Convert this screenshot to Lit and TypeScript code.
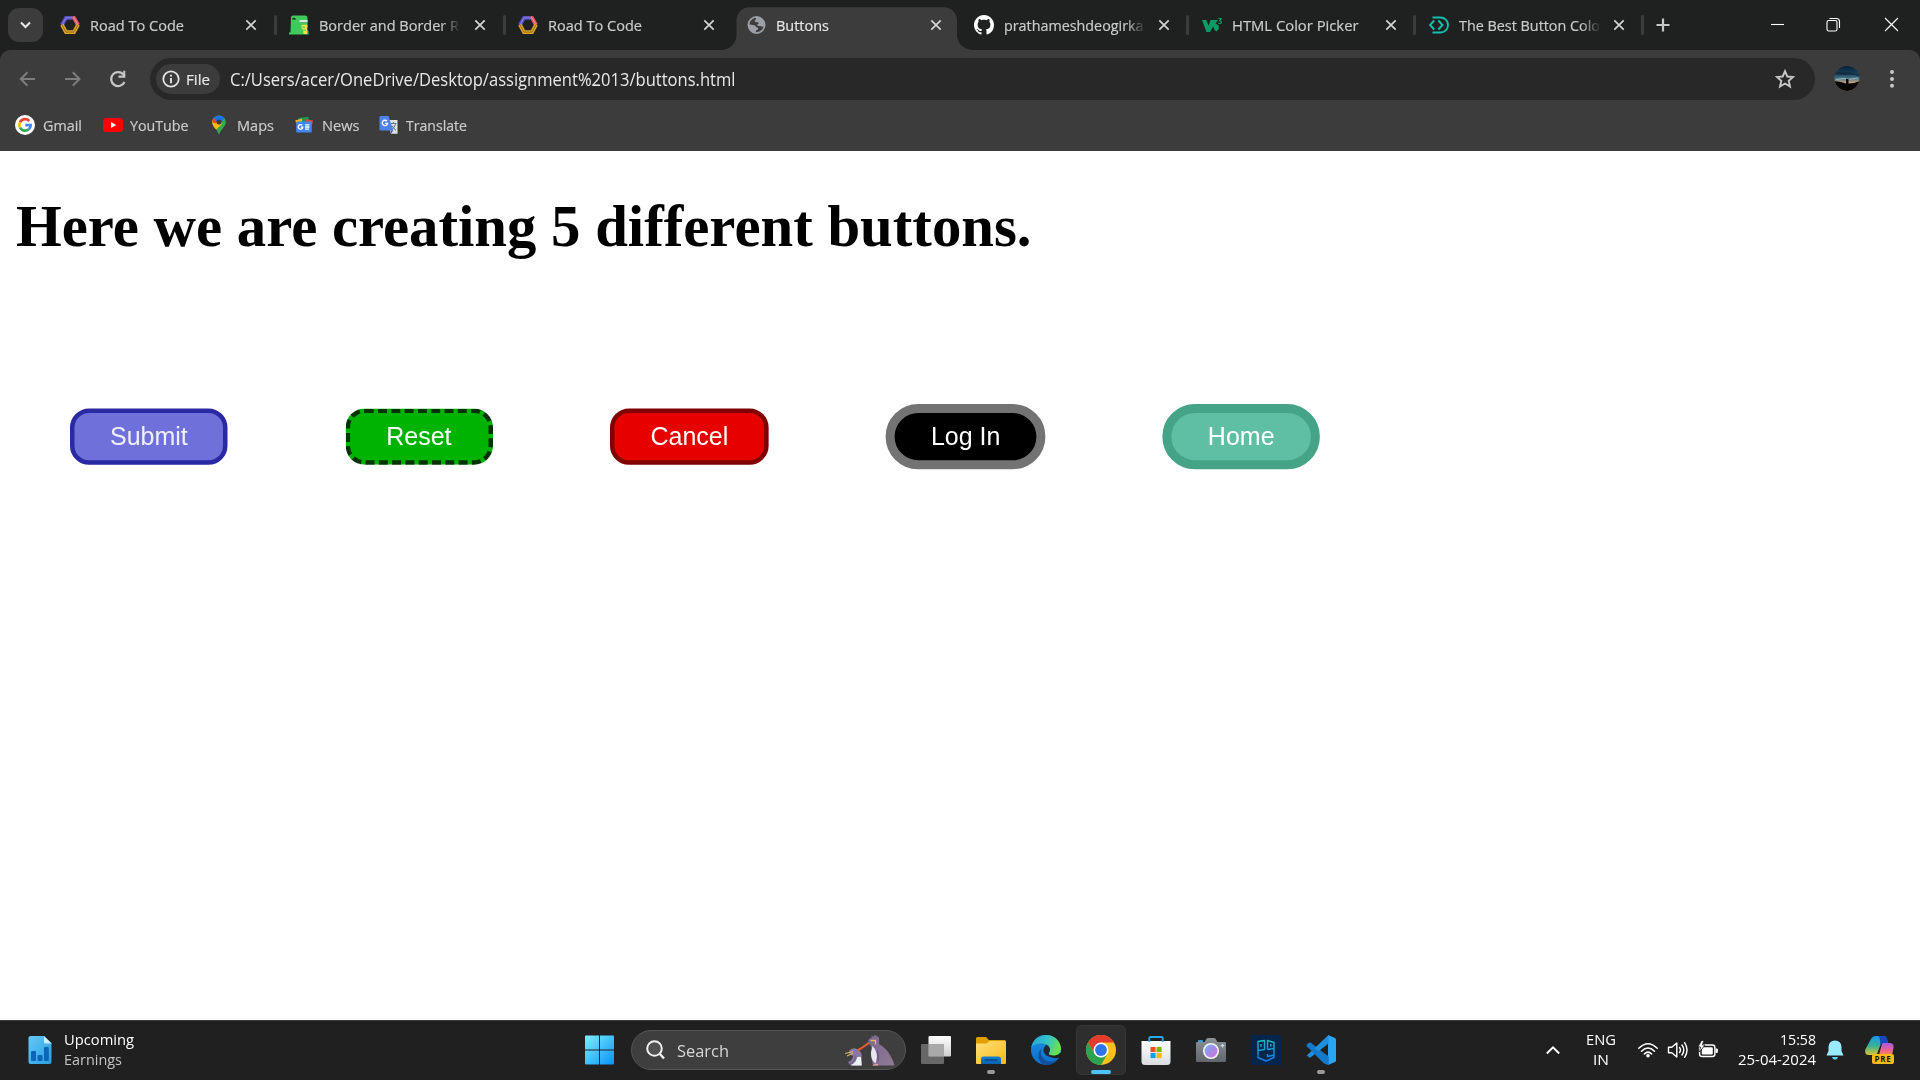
import { LitElement, html, svg, css, nothing } from "lit";
import { customElement, property, query } from "lit/decorators.js";
import { classMap } from "lit/directives/class-map.js";

/** One line of text squeezed to an exact advance width. */
@customElement("fit-text")
class FitText extends LitElement {
  @property({ type: Number }) width = 0;
  @property() text = "";
  @query("span") span!: HTMLSpanElement;
  static styles = css`
    :host { display: block; flex: none; white-space: nowrap; }
    span { display: inline-block; transform-origin: 0 50%; vertical-align: top; }
  `;
  render() {
    return html`<span>${this.text}</span>`;
  }
  updated() {
    this.style.width = `${this.width}px`;
    this.span.style.transform = "none";
    const natural = this.span.offsetWidth ? this.span.getBoundingClientRect().width : this.width;
    this.span.style.transform = `scaleX(${this.width / natural})`;
  }
}

const hexagon = svg`
  <g fill="none" stroke-width="3.800">
    <path d="M1.900 10 6 2.800H12.600" stroke="#5b50c4"/>
    <path d="M12.600 2.800H14L18.100 10" stroke="#e0566a"/>
    <path d="M18.100 9.600 14 17.100H6L1.900 9.600" stroke="#e0a526"/>
  </g>
  <g fill="none" stroke-width=".9" opacity=".75">
    <path d="M1.900 10 6 2.800H12.600" stroke="#a49cf0"/>
    <path d="M12.600 2.800H14L18.100 10" stroke="#ffb0b0"/>
    <path d="M18.100 9.600 14 17.100H6L1.900 9.600" stroke="#6e4c10"/>
  </g>`;

const favicons: Record<string, unknown> = {
  hexagon,
  dino: svg`
    <path d="M2 2.500Q2 .5 4 .5H16Q18.500 .5 18.500 3V9.500L17 10.500 18.500 11V15L19.500 16V19.500H0V17.500H1.500Z" fill="#3ecb5c"/>
    <path d="M12.500 10 18.500 9.500V12H18V19H14.500L14 15 12.500 13Z" fill="#f2df4a"/>
    <path d="M13 12.200H16M14 15H17" stroke="#3ecb5c" stroke-width="1"/>
    <path d="M10 7 11 5H18.500V7Z" fill="#dfeee2"/><path d="M10.500 7.300H18.500" stroke="#7aa886" stroke-width=".8"/>
    <path d="M3.500 4.500Q5 2.500 6.500 4.500" stroke="#123c1d" stroke-width="1.300" fill="none"/>`,
  globe: svg`
    <circle cx="9.500" cy="10" r="8.100" fill="none" stroke="#9aa0a6" stroke-width="1.800"/>
    <path d="M9 1.800C13 1.300 17.300 4.500 17.600 9.500V11.500C16 12.500 14.500 10.500 12 11C10 11.300 9.800 9.500 11.300 8.800C12.300 8.300 11.500 7.300 10 7.300C7.500 7.300 7 6 8.300 5C9.500 4 8.700 2.800 9 1.800Z" fill="#9aa0a6"/>
    <path d="M1.300 9.200C4 9.500 5.500 9.800 7.200 10.200C9.200 10.700 8.400 12.300 10.400 12.500C11.800 12.800 11.300 14.500 9.800 15C8.800 15.500 9 17 8.500 18C4 17.500 1 13.500 1.300 9.200Z" fill="#9aa0a6"/>`,
  github: svg`
    <path transform="scale(1.25)" fill="#fff" fill-rule="evenodd" d="M8 0C3.580 0 0 3.580 0 8c0 3.540 2.290 6.530 5.470 7.590.4.070.550-.170.550-.380 0-.190-.010-.820-.010-1.490-2.010.370-2.530-.490-2.690-.940-.090-.230-.480-.940-.820-1.130-.280-.150-.680-.520-.010-.530.630-.010 1.080.580 1.230.820.720 1.210 1.870.870 2.330.660.070-.520.280-.870.510-1.070-1.780-.200-3.640-.890-3.640-3.950 0-.870.310-1.590.820-2.150-.080-.200-.360-1.020.080-2.120 0 0 .670-.210 2.200.820.640-.180 1.320-.270 2-.270s1.360.090 2 .270c1.530-1.040 2.200-.820 2.200-.820.440 1.100.160 1.920.080 2.120.510.560.820 1.270.820 2.150 0 3.070-1.870 3.750-3.650 3.950.290.250.540.730.540 1.480 0 1.070-.010 1.930-.010 2.200 0 .210.150.460.550.380A8.010 8.010 0 0 0 16 8c0-4.420-3.580-8-8-8Z"/>`,
  w3: svg`
    <path d="M0 5H4.200L6.600 10.800 8.500 5H16L13.500 8.500 16.800 10.500V14L14.500 16.500 12.500 15 11.200 11.500 8 17H4.500Z" fill="#0a9c65"/>
    <path d="M16.300 3.500H19.200L17.700 5.700Q19.400 5.800 19.300 7.300 19 9 16.300 8.300" fill="none" stroke="#0a9c65" stroke-width="1.200"/>`,
  dcode: svg`
    <g fill="none" stroke="#17bfb0" stroke-width="1.900">
      <path d="M3.500 2.500H11.500A7.400 7.400 0 0 1 11.500 17.500H3.500"/>
      <path d="M5.200 5.500 1 10 5.200 14.500M9.300 5.500 13.500 10 9.300 14.500"/>
    </g>`,
};

const tabs = [
  { icon: "hexagon", title: "Road To Code", width: 94 },
  { icon: "dino", title: "Border and Border R", width: 140, cut: true },
  { icon: "hexagon", title: "Road To Code", width: 94 },
  { icon: "globe", title: "Buttons", width: 53, active: true },
  { icon: "github", title: "prathameshdeogirka", width: 139.5, cut: true },
  { icon: "w3", title: "HTML Color Picker", width: 126.5 },
  { icon: "dcode", title: "The Best Button Colo", width: 141, cut: true },
];

const bookmarks = [
  {
    label: "Gmail", width: 39, gap: 8, after: 21,
    icon: svg`<circle cx="10" cy="10" r="10" fill="#fff"/>
      <g fill="none" stroke-width="2.700">
        <path d="M14.300 6A5.700 5.700 0 0 0 5 7.300" stroke="#ea4335"/>
        <path d="M5 7.300A5.700 5.700 0 0 0 5 12.700" stroke="#fbbc05"/>
        <path d="M5 12.700A5.700 5.700 0 0 0 13.700 14.300" stroke="#34a853"/>
        <path d="M10.300 10.200H15.700A5.700 5.700 0 0 1 13.700 14.300" stroke="#4285f4"/>
      </g>`,
  },
  {
    label: "YouTube", width: 58.5, gap: 7, after: 20,
    icon: svg`<rect x="0" y="3" width="20" height="14" rx="3.500" fill="#f00"/><path d="M8 7V13L13.200 10Z" fill="#fff"/>`,
  },
  {
    label: "Maps", width: 37, gap: 8, after: 20,
    icon: svg`<path d="M10 .4C6 .4 3.200 3.500 3.200 7.200 3.200 11.500 7.500 13 10 19.800 12.500 13 16.800 11.500 16.800 7.200 16.800 3.500 14 .4 10 .4Z" fill="#34a853"/>
      <path d="M4.500 11.300Q3.200 9.400 3.200 7.200 3.200 5 4.700 3.100L8 5.800 13.500 8.500 7.300 14.500Q5.500 13 4.500 11.300Z" fill="#fbbc04"/>
      <path d="M4.700 3.100Q3.200 5 3.200 7.200L7 8.500 8.500 5.800Z" fill="#ea4335"/>
      <path d="M4.700 3.100C7.500-.6 13-.4 15.600 3.300L11.200 8 7.600 6.500Z" fill="#1a73e8"/><circle cx="10" cy="7" r="2.500" fill="#3c3c3c"/>`,
  },
  {
    label: "News", width: 37.5, gap: 8, after: 20,
    icon: svg`<path d="M4.500 3 14.500 1.800V8H4.500Z" fill="#0f9d58"/><path d="M1.200 5.500 8 3.500V9H2.500Z" fill="#fbbc04"/><path d="M12 4 19 5.500 18 10H11Z" fill="#ea4335"/>
      <rect x="2.200" y="6.500" width="15.600" height="11" rx="1.200" fill="#4285f4"/>
      <path d="M8.300 10.400A2.300 2.300 0 1 0 8.800 12.200H6.800" fill="none" stroke="#fff" stroke-width="1.300"/><path d="M11 9.800H15.500M11 12H15.500M11 14.200H15" stroke="#fff" stroke-width="1.300"/>`,
  },
  {
    label: "Translate", width: 61, gap: 7, after: 0,
    icon: svg`<path d="M7 5H18.500V18.700H12Z" fill="#e3e3e3"/><path d="M11.500 8.500H17.500M14.300 7V8.500M16.500 8.500Q15.500 13 12 14.500M12.500 10.500 17 15.500" stroke="#607d8b" stroke-width="1.100" fill="none"/>
      <path d="M1.500 1H9.500L14.300 15.500H1.500Q.5 15.500.5 14.500V2Q.5 1 1.500 1Z" fill="#4c84ee"/><path d="M11.500 15.500H14.300L12 18.700Z" fill="#2a56c6"/>
      <path d="M8 6.200A2.700 2.700 0 1 0 8.600 8.300H6.200" fill="none" stroke="#fff" stroke-width="1.300"/>`,
  },
];

const pageButtons = [
  { label: "Submit", kind: "submit" },
  { label: "Reset", kind: "reset" },
  { label: "Cancel", kind: "cancel" },
  { label: "Log In", kind: "login" },
  { label: "Home", kind: "home" },
];

const apps = [
  {
    mark: "", icon: svg`<defs><linearGradient id="tv" x2="0" y2="1"><stop stop-color="#fff"/><stop offset="1" stop-color="#cfcfcf"/></linearGradient></defs>
      <rect x="7.500" y="1" width="22.500" height="20.500" rx="1" fill="url(#tv)"/><rect x="0" y="9" width="23" height="20" rx="1" fill="#747474" opacity=".85"/><path d="M7.500 9H23V21.500H7.500Z" fill="#a9a9a9"/>`,
  },
  {
    mark: "open", icon: svg`<defs><linearGradient id="fo" x2="1" y2="1"><stop stop-color="#ffe07a"/><stop offset="1" stop-color="#fbb917"/></linearGradient><linearGradient id="fb" x2="0" y2="1"><stop stop-color="#1481d0"/><stop offset="1" stop-color="#0a62b0"/></linearGradient></defs>
      <path d="M0 3.500Q0 2 1.500 2H10L13 5H28.500Q30 5 30 6.500V10H0Z" fill="#e0a100"/><path d="M0 8.500H10.500L13.500 6H29Q30 6 30 7V28Q30 29 29 29H1Q0 29 0 28Z" fill="url(#fo)"/>
      <path d="M5 29V24Q5 21.500 7.500 21.500H22.500Q25 21.500 25 24V29Z" fill="url(#fb)"/><path d="M8.500 25H21.500" stroke="#083f78" stroke-width="1.200"/>`,
  },
  {
    mark: "", icon: svg`<defs><linearGradient id="ea" x2="1" y2=".3"><stop stop-color="#259fdf"/><stop offset=".6" stop-color="#35c6c4"/><stop offset="1" stop-color="#6cdf4f"/></linearGradient><linearGradient id="eb" x2="0" y2="1"><stop stop-color="#1a90e0"/><stop offset="1" stop-color="#0b6fce"/></linearGradient></defs>
      <circle cx="15" cy="15" r="15" fill="url(#eb)"/>
      <path d="M11 13C8 18 11 26 19 26.500 23 26.700 26 25 27.800 23 24 29 18 30.500 14 30 7 28 5 18 11 13Z" fill="#124f9c"/>
      <path d="M30 21.500Q26 24.500 20.500 22.500 17.500 21.300 17.800 19L25 18H31V22Z" fill="#202020"/>
      <path d="M.3 12.500C2 4 8 0 15 0 24 0 30 6.500 30 14 30 18.500 26.500 20.500 22.500 20.500 19 20.500 17.300 19.500 18 18 20.500 13.500 16.500 9 11.500 8.500 6 8 2 10 .3 12.500Z" fill="url(#ea)"/>
      <path d="M15.500 9.500Q19.500 12 19 15.500 18 18 17.600 19 18 21 20 22 15 21.500 13 18 11 14 15.500 9.500Z" fill="#202020" opacity=".9"/>`,
  },
  {
    mark: "active", icon: svg`<circle cx="15" cy="15" r="15" fill="#fbc116"/>
      <path d="M2 7.500A15 15 0 0 1 28 7.500H15L8.500 18.800Z" fill="#e33b2e"/>
      <path d="M2 7.500A15 15 0 0 0 15 30L21.500 18.800 15 22.500 8.500 18.800Z" fill="#2da24c"/><circle cx="15" cy="15" r="7.500" fill="#fff"/><circle cx="15" cy="15" r="5.900" fill="#2f74ea"/>`,
  },
  {
    mark: "", icon: svg`<defs><linearGradient id="st" x2="0" y2="1"><stop stop-color="#fff"/><stop offset="1" stop-color="#d9dde0"/></linearGradient></defs>
      <path d="M.5 6H29.500V26.500Q29.500 30 26 30H4Q.5 30 .5 26.500Z" fill="url(#st)"/><path d="M8.300 7V3Q8.300 2 9.300 2H20.700Q21.700 2 21.700 3V7" fill="none" stroke="#26a9ea" stroke-width="1.800"/>
      <path d="M9.500 12H14.600V17.100H9.500Z" fill="#f25022"/><path d="M15.500 12H20.600V17.100H15.500Z" fill="#7fba00"/><path d="M9.500 18H14.600V23.100H9.500Z" fill="#00a4ef"/><path d="M15.500 18H20.600V23.100H15.500Z" fill="#ffb900"/>`,
  },
  {
    mark: "", icon: svg`<defs><linearGradient id="ca" x2="0" y2="1"><stop stop-color="#8b9298"/><stop offset="1" stop-color="#60666b"/></linearGradient><linearGradient id="cl" x2="1" y2="1"><stop stop-color="#70b8f5"/><stop offset=".5" stop-color="#a48be6"/><stop offset="1" stop-color="#d873dc"/></linearGradient></defs>
      <rect x="2" y="5" width="5" height="3" rx="1" fill="#2e9fe0"/><path d="M0 8Q0 7 1 7H8.500L10.500 3.800Q11 3 12 3H18Q19 3 19.500 3.800L21.500 7H29Q30 7 30 8V26Q30 27 29 27H1Q0 27 0 26Z" fill="url(#ca)"/>
      <circle cx="15" cy="16" r="8" fill="#f3f3f3"/><circle cx="15" cy="16" r="6.400" fill="url(#cl)"/><path d="M26.500 9V12.500M24.700 10.700H28.300" stroke="#d5d8da" stroke-width="1.200"/>`,
  },
  {
    mark: "", icon: svg`<defs><linearGradient id="pg" gradientUnits="userSpaceOnUse" x1="0" y1="4" x2="0" y2="27"><stop stop-color="#17c5bd"/><stop offset="1" stop-color="#1673e6"/></linearGradient></defs>
      <rect width="30" height="30" fill="#04254c"/><g fill="none" stroke="url(#pg)" stroke-width="1.400" stroke-linejoin="round">
      <path d="M7 20.500V6.500L13.500 5.500V14.500L7 15.500"/><path d="M10 9V12"/><path d="M16.500 14.500V5.500L23 7.500V20L16.500 21.500V19M16.500 14.500 23 13.500M19.800 9V11.500"/><path d="M7 20.500V22.500L15 26 23 22.500V20"/></g>`,
  },
  {
    mark: "open", icon: svg`<path d="M22 0 29 3Q30 3.500 30 4.500V25.500Q30 26.500 29 27L22 30Z" fill="#2aa5f3"/>
      <path d="M.8 9.500 3 7.700Q4 7.200 4.800 7.800L22.500 21.500V30Z" fill="#1479c9"/><path d="M.8 20.500 3 22.300Q4 22.800 4.800 22.200L22.500 8.500V0Z" fill="#1f90db"/><path d="M.8 9.500Q0 10.500.8 11.300L18 28.500 22.500 30V21.500Z" fill="#1479c9"/>`,
  },
];

@customElement("browser-tabs")
class BrowserTabs extends LitElement {
  static styles = css`
    :host { display: flex; height: 50px; background: #1f2120; color: #cbcbcb; font: 500 15px/50px "Open Sans", "Noto Sans", sans-serif; -webkit-text-stroke: .2px; }
    svg { display: block; flex: none; }
    .search { width: 35px; height: 34px; margin: 8px 5px 0 8px; border-radius: 11px; background: #3c3c3c; flex: none; }
    .tab { position: relative; box-sizing: border-box; width: 229px; height: 50px; padding-left: 12px; display: flex; align-items: center; flex: none; }
    .late { width: 227.400px; }
    .title { width: 143px; margin-left: 10px; overflow: hidden; flex: none; }
    .cut { mask-image: linear-gradient(90deg, #000 122px, transparent 142px); }
    .close { margin-left: 12px; }
    .late .close { margin-left: 10.500px; }
    .divider { width: 3px; height: 20px; border-radius: 1.500px; background: #3c3c3c; margin-left: 17px; }
    .late .divider { margin-left: 16.200px; }
    .active { color: #e6e6e6; z-index: 1; }
    .active svg, .active .title { z-index: 1; }
    .active .title { margin-left: 9px; margin-right: .4px; }
    .shape { position: absolute; left: -14.500px; top: 0; }
    .add { margin: 0 0 0 4.500px; align-self: center; }
    .controls { display: flex; margin-left: auto; }
  `;
  render() {
    return html`
      <svg class="search" viewBox="0 0 35 34"><path d="M13 14.500 17.500 19 22 14.500" fill="none" stroke="#e8e8e8" stroke-width="2.100"/></svg>
      ${tabs.map((t, i) => html`
        <div class=${classMap({ tab: true, active: !!t.active, late: i > 2 })}>
          ${t.active ? html`<svg class="shape" width="252" height="50"><path d="M0 50A15.500 15.500 0 0 0 15.500 36V20A13 13 0 0 1 28.500 7.300H222.500A13 13 0 0 1 236 20V36A15.500 15.500 0 0 0 251 50Z" fill="#3c3c3c"/></svg>` : nothing}
          <svg class="icon" width="20" height="20" viewBox="0 0 20 20">${favicons[t.icon]}</svg>
          <div class=${classMap({ title: true, cut: !!t.cut })}><fit-text .text=${t.title} .width=${t.width}></fit-text></div>
          <svg class="close" width="12" height="12" viewBox="0 0 12 12"><path d="M1.300 1.300 10.700 10.700M10.700 1.300 1.300 10.700" stroke="#d4d4d4" stroke-width="1.700"/></svg>
          ${t.active || i === 2 ? nothing : html`<div class="divider"></div>`}
        </div>`)}
      <svg class="add" width="28" height="28" viewBox="0 0 28 28"><path d="M14 7.500V20.500M7.500 14H20.500" stroke="#c7c7c7" stroke-width="2.200"/></svg>
      <div class="controls">
        <svg width="57" height="50" viewBox="0 0 57 50"><path d="M22 24.500H35" stroke="#fff" stroke-width="1.100"/></svg>
        <svg width="57" height="50" viewBox="0 0 57 50"><g fill="none" stroke="#fff" stroke-width="1.100"><rect x="21" y="20.500" width="10" height="10.500" rx="1.800"/><path d="M23.500 18.500H30.500Q33.500 18.500 33.500 21.500V28"/></g></svg>
        <svg width="57" height="50" viewBox="0 0 57 50"><path d="M22 18 35 31M35 18 22 31" stroke="#fff" stroke-width="1.200"/></svg>
      </div>`;
  }
}

@customElement("browser-toolbar")
class BrowserToolbar extends LitElement {
  static styles = css`
    :host { display: block; height: 101px; background: #1f2120; font-family: "Open Sans", "Noto Sans", sans-serif; }
    .panel { height: 101px; box-sizing: border-box; background: #3c3c3c; border-radius: 10px 10px 0 0; padding-top: 8px; }
    svg { display: block; flex: none; }
    .row { display: flex; align-items: center; height: 42px; padding: 0 16px; }
    .nav { display: flex; gap: 21px; width: 134px; flex: none; }
    .omnibox { display: flex; align-items: center; box-sizing: border-box; width: 1665px; height: 42px; padding: 0 20px 0 6px; border-radius: 21px; background: #282828; }
    .chip { display: flex; align-items: center; gap: 6px; box-sizing: border-box; width: 64px; height: 30px; padding-left: 6px; border-radius: 15px; background: #3c3c3c; color: #e6e6e6; font: 500 15px/30px "Open Sans", sans-serif; -webkit-text-stroke: .2px; }
    .url { margin-left: 10px; color: #e8e8e8; font-size: 17.500px; line-height: 42px; }
    .star { margin-left: auto; }
    .avatar { margin: 0 0 0 19px; }
    .menu { margin-left: 21.500px; }
    .bookmarks { display: flex; align-items: center; height: 50px; padding-left: 15px; color: #cbcbcb; font: 500 15px/50px "Open Sans", sans-serif; -webkit-text-stroke: .2px; }
    .mark { display: flex; align-items: center; }
  `;
  render() {
    return html`<div class="panel">
      <div class="row">
        <div class="nav">
          <svg width="24" height="24" viewBox="0 0 24 24"><path d="M19 12H5.500M11.500 5.300 4.800 12 11.500 18.700" fill="none" stroke="#7d7d7d" stroke-width="2"/></svg>
          <svg width="24" height="24" viewBox="0 0 24 24"><path d="M4 12H18M11.800 5.300 18.500 12 11.800 18.700" fill="none" stroke="#7d7d7d" stroke-width="2"/></svg>
          <svg width="24" height="24" viewBox="0 0 24 24"><path d="M18.500 15A7 7 0 1 1 17.200 7.200L18.500 9" fill="none" stroke="#c7c7c7" stroke-width="2.200"/><path d="M19.300 3.800V10.700H12.500V8.600H17.200V3.800Z" fill="#c7c7c7"/></svg>
        </div>
        <div class="omnibox">
          <div class="chip">
            <svg width="18" height="18" viewBox="0 0 18 18"><circle cx="9" cy="9" r="7.700" fill="none" stroke="#e3e3e3" stroke-width="1.800"/><path d="M9 8V13.300M9 4.700V6.500" stroke="#e3e3e3" stroke-width="1.900"/></svg>
            <fit-text .text=${"File"} .width=${24}></fit-text>
          </div>
          <fit-text class="url" .text=${"C:/Users/acer/OneDrive/Desktop/assignment%2013/buttons.html"} .width=${505.5}></fit-text>
          <svg class="star" width="20" height="20" viewBox="0 0 20 20"><path d="M10 2.200 12.300 7.500 18 8 13.700 11.800 15 17.500 10 14.500 5 17.500 6.300 11.800 2 8 7.700 7.500Z" fill="none" stroke="#c7c7c7" stroke-width="1.900"/></svg>
        </div>
        <svg class="avatar" width="26" height="26" viewBox="0 0 26 26">
          <defs><clipPath id="disc"><circle cx="13" cy="12.500" r="12.500"/></clipPath>
          <linearGradient id="sky" x2="0" y2="1"><stop stop-color="#0d2133"/><stop offset=".3" stop-color="#17405f"/><stop offset=".5" stop-color="#54798b"/><stop offset=".66" stop-color="#dca878"/></linearGradient></defs>
          <g clip-path="url(#disc)"><rect width="26" height="26" fill="url(#sky)"/><path d="M0 8 10 9 20 8.500 26 11V9L15 6 0 6Z" fill="#122c40"/><path d="M2 13.500 10 12.500 14 13.500 24 12" stroke="#9fb9c0" fill="none"/>
          <path d="M0 15 7 16 12 17.500V13H14.500V17.500L20 17 26 15V26H0Z" fill="#060606"/></g>
        </svg>
        <svg class="menu" width="20" height="20" viewBox="0 0 20 20"><g fill="#c7c7c7"><circle cx="10" cy="3" r="2"/><circle cx="10" cy="10" r="2"/><circle cx="10" cy="16.800" r="2"/></g></svg>
      </div>
      <div class="bookmarks">
        ${bookmarks.map((b) => html`<div class="mark">
          <svg width="20" height="20" viewBox="0 0 20 20">${b.icon}</svg>
          <fit-text style=${`margin:0 ${b.after}px 0 ${b.gap}px`} .text=${b.label} .width=${b.width}></fit-text>
        </div>`)}
      </div>
    </div>`;
  }
}

@customElement("buttons-page")
class ButtonsPage extends LitElement {
  static styles = css`
    :host { display: block; flex: 1; background: #fff; }
    h1 { margin: 0; padding: 41px 0 0 16px; font: bold 60px/69px "Liberation Serif", serif; color: #000; }
    .row { display: flex; align-items: center; width: 1200px; gap: 104.300px; margin: 142.700px 0 0 70.400px; transform: scale(1.125); transform-origin: 0 0; }
    button { box-sizing: border-box; height: 50px; padding: 0; border-radius: 17px; font: 22.220px/27px "Liberation Sans", Arial, sans-serif; color: #fff; }
    .submit { width: 140.300px; background: #7070db; border: 4px solid #2929a3; color: #f0f0fa; }
    .reset { width: 131px; background: #00b300; border: 4px dashed #003300; }
    .cancel { width: 141.300px; background: #e60000; border: 4px solid #800000; }
    .login { width: 141.300px; height: 57.800px; background: #000; border: 8px solid #737373; border-radius: 29px; }
    .home { width: 140px; height: 57.800px; background: #5fbfa5; border: 8px solid #45a387; border-radius: 29px; }
  `;
  render() {
    return html`<h1><fit-text .text=${"Here we are creating 5 different buttons."} .width=${1015.5}></fit-text></h1>
      <div class="row">${pageButtons.map((b) => html`<button class=${b.kind}>${b.label}</button>`)}</div>`;
  }
}

@customElement("task-bar")
class TaskBar extends LitElement {
  static styles = css`
    :host { display: flex; box-sizing: border-box; height: 60px; padding-bottom: 1px; border-top: 1px solid #3b3d3c; background: #202020; color: #fff; font: 15px/20px "Open Sans", "Noto Sans", sans-serif; align-items: center; }
    svg { display: block; flex: none; }
    .widget { display: flex; align-items: center; width: 585px; box-sizing: border-box; padding-left: 28px; gap: 12px; }
    .dim { color: #c5c5c5; }
    .stack { display: flex; flex-direction: column; margin-bottom: 3px; }
    .search { display: flex; align-items: center; box-sizing: border-box; width: 275px; height: 40px; margin: 0 5px 0 16px; padding: 0 10px 0 14px; border: 1px solid #555; border-radius: 20px; background: #3e3e3e; font-size: 17px; color: #d6d6d6; }
    .search fit-text { margin-left: 12px; padding-top: 1px; }
    .birds { margin-left: auto; }
    .app { display: flex; flex-direction: column; align-items: center; box-sizing: border-box; width: 50px; height: 50px; margin-right: 5px; padding-top: 10px; border-radius: 6px; flex: none; }
    .app.active { background: #2e2e2e; box-shadow: inset 0 0 0 1px #363636; }
    .pill { width: 8px; height: 4px; margin-top: 5px; border-radius: 2px; background: #9a9a9a; }
    .active .pill { width: 20px; background: #4cc2ff; }
    .tray { display: flex; align-items: center; margin-left: auto; padding-right: 26px; }
    .lang { align-items: center; margin-left: 25px; margin-right: 21px; }
    .clock { align-items: flex-end; margin-left: 19.500px; margin-right: 10px; }
    .icons { display: flex; gap: 8px; }
    .copilot { margin-left: 21px; position: relative; }
    .pre { position: absolute; left: 7px; top: 19px; width: 22px; height: 10px; border-radius: 2px; background: #fdb913; color: #1c1600; font: bold 8px/10px "Open Sans", sans-serif; letter-spacing: .8px; text-align: center; }
  `;
  render() {
    return html`
      <div class="widget">
        <svg width="24" height="28" viewBox="0 0 24 28"><defs><linearGradient id="doc" x2="1" y2="1"><stop stop-color="#65c8f5"/><stop offset="1" stop-color="#279fe4"/></linearGradient></defs>
          <path d="M.5 2Q.5 0 2.500 0H16L23.500 7V26Q23.500 28 21.500 28H2.500Q.5 28 .5 26Z" fill="url(#doc)"/><path d="M16 0 23.500 7.500H17.500Q16 7.500 16 6Z" fill="#c9efff"/>
          <g fill="#0c66b7"><rect x="3" y="15" width="5" height="10" rx="1"/><rect x="9.500" y="19" width="5" height="6" rx="1"/><rect x="16" y="11" width="4.800" height="14" rx="1"/></g></svg>
        <div class="stack"><fit-text .text=${"Upcoming"} .width=${70}></fit-text><fit-text class="dim" .text=${"Earnings"} .width=${58}></fit-text></div>
      </div>
      <svg width="30" height="30" viewBox="0 0 30 30"><defs><linearGradient id="win" gradientUnits="userSpaceOnUse" x1="0" y1="0" x2="29" y2="29"><stop stop-color="#7df0ff"/><stop offset="1" stop-color="#0a92f7"/></linearGradient></defs>
        <path d="M0 1.500Q0 .5 1 .5H14V14.500H0ZM15 .5H28Q29 .5 29 1.500V14.500H15ZM0 15.500H14V29.500H1Q0 29.500 0 28.500ZM15 15.500H29V28.500Q29 29.500 28 29.500H15Z" fill="url(#win)"/></svg>
      <div class="search">
        <svg width="19" height="20" viewBox="0 0 19 20"><circle cx="8.500" cy="8.500" r="7.300" fill="#505050" stroke="#f0f0f0" stroke-width="2"/><path d="M13.700 13.700 18 18.500" stroke="#f0f0f0" stroke-width="2.300"/></svg>
        <fit-text .text=${"Search"} .width=${52}></fit-text>
        <svg class="birds" width="50" height="32" viewBox="0 0 50 32">
          <defs><linearGradient id="pen" x2="1" y2="1"><stop stop-color="#786591"/><stop offset="1" stop-color="#927b96"/></linearGradient></defs>
          <path d="M23 8.500Q23 4 27 3.500L26 1.500 29 2.500 29.500 .5 34 3.500Q34.500 7 34 10 41 14 45 21 48.500 27 49.500 31.500H28Q26 25 27 18 27 12 23 8.500Z" fill="url(#pen)"/>
          <path d="M27.500 12Q32 17 32 23L30.500 29.500Q25.500 26 26 18Z" fill="#e9e6f0"/><path d="M32 15Q35 20 33.500 29L32 24Z" fill="#6b5885"/><path d="M27 31.500Q29 29.500 33 30V31.500Z" fill="#e9a29c"/>
          <path d="M4 17Q7 13 12 15 18 18 16.500 24V31.500H8Q5 31.500 3 28 8 26 8 22 4 21 4 17Z" fill="#8a78a2"/><path d="M8 26Q13 22 16 23L16.800 31.500H6Z" fill="#edf2f4"/><path d="M4 29.500Q9 27 10 21L12 24Q10 30 5 31Z" fill="#796690"/>
          <path d="M12 15.500 17 12.800 22.500 8.500 25 9.500 19 13.500 14 17Z" fill="#f45a2a"/><path d="M0 19.500 8 17.500M2 22 8 19" stroke="#d9b56a" stroke-width="1.100"/><path d="M25.500 6.500 30.500 6.500 30.500 10.500" fill="none" stroke="#e5b75d" stroke-width="1.400"/>
        </svg>
      </div>
      ${apps.map((a) => html`<div class=${`app ${a.mark}`}><svg width="30" height="30" viewBox="0 0 30 30">${a.icon}</svg>${a.mark ? html`<div class="pill"></div>` : nothing}</div>`)}
      <div class="tray">
        <svg width="16" height="12" viewBox="0 0 16 12"><path d="M1.800 9.500 8 3.300 14.200 9.500" fill="none" stroke="#fff" stroke-width="1.900"/></svg>
        <div class="stack lang"><fit-text .text=${"ENG"} .width=${30}></fit-text><fit-text .text=${"IN"} .width=${16}></fit-text></div>
        <div class="icons">
          <svg width="22" height="20" viewBox="0 0 22 20"><g fill="none" stroke="#fff" stroke-width="1.500" stroke-linecap="round"><path d="M1.800 8.300Q11-.8 20.200 8.300"/><path d="M4.500 11.200Q11 4.700 17.500 11.200"/><path d="M7.300 14Q11 10.300 14.700 14"/></g><circle cx="11" cy="15.800" r="1.800" fill="#fff"/></svg>
          <svg width="22" height="20" viewBox="0 0 22 20"><g fill="none" stroke="#fff" stroke-width="1.400" stroke-linejoin="round" stroke-linecap="round"><path d="M1.500 7.200H4.800L9.800 3V17L4.800 12.800H1.500Z"/><path d="M12.500 7.500Q14.500 10 12.500 12.500M15 5Q18.600 10 15 15M17.600 2.700Q22.500 10 17.600 17.300"/></g></svg>
          <svg width="22" height="20" viewBox="0 0 22 20"><rect x="2.600" y="5" width="15.300" height="11.500" rx="2.500" fill="none" stroke="#fff" stroke-width="1.400"/><rect x="4.800" y="7.200" width="11" height="7.200" rx="1" fill="#fff"/><path d="M18.700 8.500H20Q21 8.500 21 10.700T20 13H18.700Z" fill="#fff"/><path d="M4.500.5 1 7H3.500L2.500 12 8 5H5.300L7 .5Z" fill="#fff" stroke="#202020" stroke-width=".8"/></svg>
        </div>
        <div class="stack clock"><fit-text .text=${"15:58"} .width=${36}></fit-text><fit-text .text=${"25-04-2024"} .width=${78}></fit-text></div>
        <svg width="18" height="20" viewBox="0 0 18 20"><path d="M9 .5Q15.200.8 15.500 7V11L17.500 15.500H.5L2.500 11V7Q2.800.8 9 .5Z" fill="#99ebff"/><path d="M6 17H12Q11.500 19.700 9 19.700T6 17Z" fill="#60cdff"/></svg>
        <div class="copilot">
          <svg width="29" height="30" viewBox="0 0 29 30"><defs><linearGradient id="c1" x2="0" y2="1"><stop stop-color="#1997e8"/><stop offset=".5" stop-color="#35b296"/><stop offset="1" stop-color="#e0c52c"/></linearGradient><linearGradient id="c2" x2="0" y2="1"><stop stop-color="#a35ae6"/><stop offset=".6" stop-color="#ef6291"/><stop offset="1" stop-color="#f58b56"/></linearGradient></defs>
            <path d="M6 4Q7.500 1 11 1H18Q21 1 22 4L23 8H18Q16 8 15 11L12 19Q11 21 8 20H4Q-1 20 .5 14Z" fill="url(#c1)"/><path d="M13 1H18Q21 1 22 4L23 8H18L15 10Q16 3 13 1Z" fill="#1548c0"/>
            <path d="M18 8H25Q29.500 8 28.300 14L27 20H14L16.500 10.500Q17 8 18 8Z" fill="url(#c2)"/></svg>
          <div class="pre">PRE</div>
        </div>
      </div>`;
  }
}

@customElement("app-root")
class AppRoot extends LitElement {
  static styles = css`
    :host { display: flex; flex-direction: column; width: 1920px; height: 1080px; overflow: hidden; }
  `;
  render() {
    return html`<browser-tabs></browser-tabs><browser-toolbar></browser-toolbar><buttons-page></buttons-page><task-bar></task-bar>`;
  }
}
